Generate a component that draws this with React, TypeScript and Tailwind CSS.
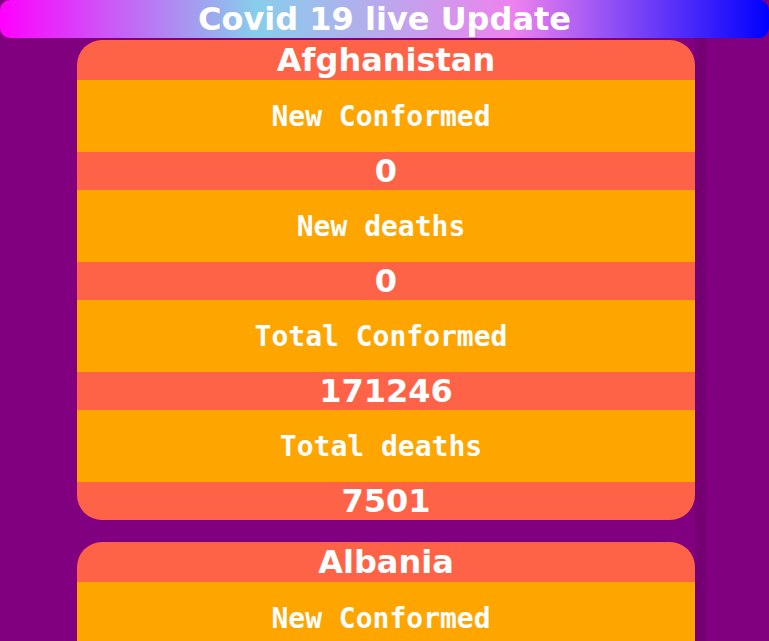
import React from "react";

type Country = {
  name: string;
  newConfirmed: number;
  newDeaths: number;
  totalConfirmed: number;
  totalDeaths: number;
};

const data: Country[] = [
  { name: "Afghanistan", newConfirmed: 0, newDeaths: 0, totalConfirmed: 171246, totalDeaths: 7501 },
  { name: "Albania", newConfirmed: 0, newDeaths: 0, totalConfirmed: 274462, totalDeaths: 3496 },
];

function Label({ children }: { children: React.ReactNode }) {
  return (
    <div className="h-[72px] pr-[10px] bg-[#ffa500] text-white text-center text-[28px] leading-[74px] font-bold font-['DejaVu_Sans_Mono',monospace] overflow-hidden">
      {children}
    </div>
  );
}

function Value({ children }: { children: React.ReactNode }) {
  return (
    <div className="h-[38px] bg-[#ff6347] text-white text-center text-[32px] leading-[38px] font-bold font-['DejaVu_Sans',sans-serif]">
      {children}
    </div>
  );
}

function Card({ c }: { c: Country }) {
  return (
    <div className="w-[618px] shrink-0 rounded-[25px] overflow-hidden">
      <div className="h-[40px] bg-[#ff6347] text-white text-center text-[32px] leading-[40px] font-bold font-['DejaVu_Sans',sans-serif]">
        {c.name}
      </div>
      <Label>New Conformed</Label>
      <Value>{c.newConfirmed}</Value>
      <Label>New deaths</Label>
      <Value>{c.newDeaths}</Value>
      <Label>Total Conformed</Label>
      <Value>{c.totalConfirmed}</Value>
      <Label>Total deaths</Label>
      <Value>{c.totalDeaths}</Value>
    </div>
  );
}

export default function App() {
  return (
    <div className="h-[641px] overflow-hidden bg-[#800080] flex flex-col">
      <div className="h-[38px] shrink-0 rounded-[10px] bg-[linear-gradient(to_right,#ff00ff,#87ceeb,#ee82ee,#0000ff)] text-white text-center text-[32px] leading-[38px] font-bold font-['DejaVu_Sans',sans-serif]">
        Covid 19 live Update
      </div>
      <div className="flex flex-1 min-h-0">
        <div className="ml-[77px] pt-[2px] flex flex-col gap-[22px] shrink-0">
          {data.map((c) => (
            <Card key={c.name} c={c} />
          ))}
        </div>
        <div className="w-[11px] bg-[#740074]" />
      </div>
    </div>
  );
}
